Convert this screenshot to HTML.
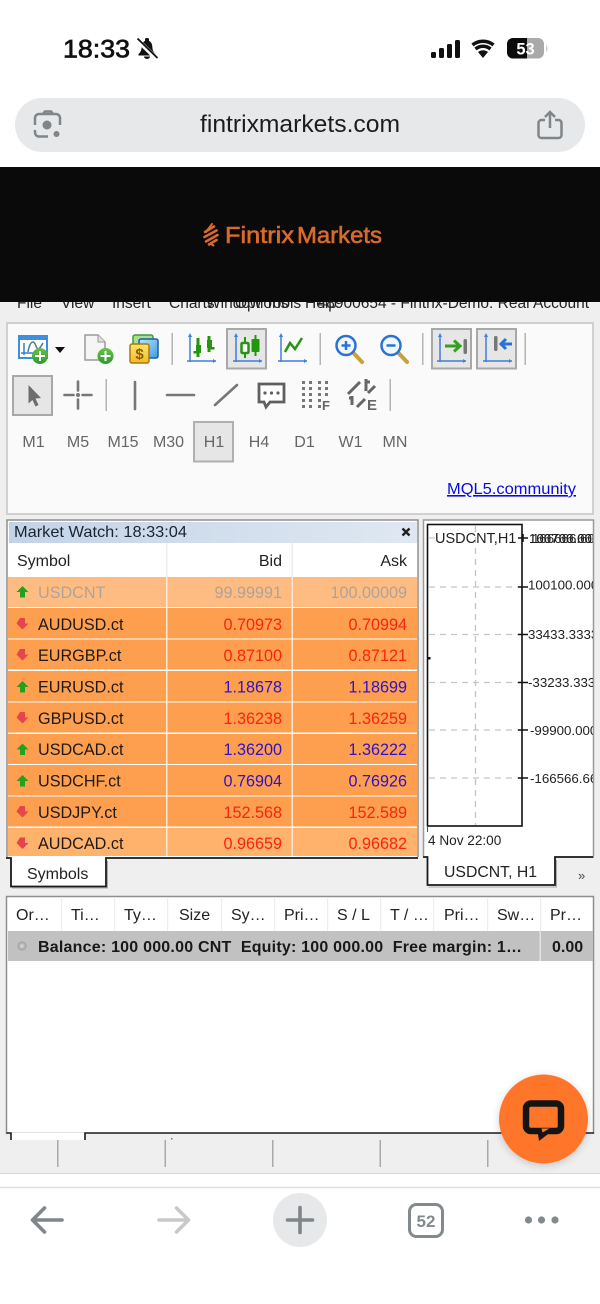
<!DOCTYPE html>
<html><head><meta charset="utf-8"><style>
html,body{margin:0;padding:0;background:#fff;width:600px;height:1304px;overflow:hidden}
svg{display:block;font-family:"Liberation Sans",sans-serif}
.r{font-size:16.2px;fill:#1e1a18}
.red{fill:#fa2410;font-size:16.2px;text-anchor:end}
.blu{fill:#2f12c8;font-size:16.2px;text-anchor:end}
.g{fill:#aaa49c;font-size:16.2px}
.tf{font-size:16px;fill:#666;text-anchor:middle}
.th{font-size:16px;fill:#222}
.ax{font-size:13.3px;fill:#222}
</style></head><body>
<svg width="600" height="1304" viewBox="0 0 600 1304" xmlns="http://www.w3.org/2000/svg">
<defs>
<linearGradient id="tt" x1="0" x2="1" y1="0" y2="0"><stop offset="0" stop-color="#c3d3e6"/><stop offset="1" stop-color="#dfe8f2"/></linearGradient>
<linearGradient id="gb" x1="0" x2="0" y1="0" y2="1"><stop offset="0" stop-color="#6cc04a"/><stop offset="1" stop-color="#2c9a2c"/></linearGradient>
<linearGradient id="yl" x1="0" x2="0" y1="0" y2="1"><stop offset="0" stop-color="#ffe36a"/><stop offset="1" stop-color="#f5bb22"/></linearGradient>
<linearGradient id="bl" x1="0" x2="1" y1="0" y2="1"><stop offset="0" stop-color="#bfe4fb"/><stop offset="1" stop-color="#3c9be6"/></linearGradient>
<radialGradient id="dot"><stop offset="0" stop-color="#dedede"/><stop offset="1" stop-color="#9a9a9a"/></radialGradient>
<clipPath id="axc"><rect x="524" y="524" width="69" height="270"/></clipPath>
<clipPath id="menu"><rect x="0" y="302" width="600" height="12"/></clipPath>
<clipPath id="batL"><rect x="507" y="38" width="20" height="21"/></clipPath>
<filter id="sh" x="-30%" y="-30%" width="160%" height="160%"><feDropShadow dx="0" dy="2" stdDeviation="4" flood-color="#000" flood-opacity=".18"/></filter>
<g id="up"><path d="M0 6 L6 0 L12 6 H8.5 V11.5 H3.5 V6 Z" fill="#22a01e"/></g>
<g id="dn"><path d="M3.5 0 H8.5 V5.5 H12 L6 11.5 L0 5.5 Z" fill="#e3474a"/></g>
</defs>

<!-- status bar -->
<text x="63" y="57.5" font-size="25" fill="#111" stroke="#111" stroke-width=".7" textLength="67" lengthAdjust="spacingAndGlyphs">18:33</text>
<g fill="#111">
<path d="M138.500 54 c2.500-2 3-4.500 3.200-7.500 c.2-3.500 2-6 5.300-6 s5.100 2.500 5.300 6 c.2 3 .7 5.500 3.200 7.500 v1.500 h-17z"/>
<rect x="145" y="38" width="4" height="4" rx="1.500"/><path d="M144 56.500 h6 a3 2.500 0 0 1-6 0z"/>
<rect x="431" y="52" width="5" height="6" rx="1.500"/><rect x="439" y="48" width="5" height="10" rx="1.500"/><rect x="447" y="44" width="5" height="14" rx="1.500"/><rect x="455" y="40" width="5" height="18" rx="1.500"/>
<path d="M483 58 l-5-6 a8 8 0 0 1 10 0z"/>
</g>
<path d="M137 39.500 L157 59" stroke="#fff" stroke-width="4.500"/><path d="M137.500 38.500 L157.500 58" stroke="#111" stroke-width="1.800"/>
<g fill="none" stroke="#111" stroke-width="3.500"><path d="M475.500 49 a11.500 11.500 0 0 1 15 0"/><path d="M472.500 45 a16.500 16.500 0 0 1 21 0"/></g>
<rect x="507" y="38" width="37" height="20.500" rx="6" fill="#a9a9a9"/>
<rect x="507" y="38" width="37" height="20.500" rx="6" fill="#0c0c0c" clip-path="url(#batL)"/>
<path d="M546 45 a3 4 0 0 1 0 7z" fill="#ccc"/>
<text x="525.500" y="54.500" font-size="16.500" font-weight="700" fill="#fff" text-anchor="middle">53</text>

<!-- url bar -->
<rect x="15" y="98" width="570" height="54" rx="27" fill="#e6e8ea"/>
<text x="300" y="132" font-size="24" fill="#1c1c1c" text-anchor="middle" textLength="200" lengthAdjust="spacingAndGlyphs">fintrixmarkets.com</text>
<g fill="none" stroke="#7f8589" stroke-width="2.500">
<path d="M35 125 v-7 a4 4 0 0 1 4-4 h17 a4 4 0 0 1 4 4 v7"/><path d="M35 130 v2.500 a4 4 0 0 0 4 4 h9"/>
<path d="M43 114 l2-2.500 h6 l2 2.500"/>
<path d="M545 120 h-3.500 a3 3 0 0 0-3 3 v12 a3 3 0 0 0 3 3 h17 a3 3 0 0 0 3-3 v-12 a3 3 0 0 0-3-3 h-3.500"/>
<path d="M550 128 v-15 M545 117 l5-5 l5 5"/>
</g>
<circle cx="47" cy="125" r="4.500" fill="#7f8589"/><circle cx="56.500" cy="134" r="3" fill="#7f8589"/>

<!-- page bg -->
<rect x="0" y="302" width="600" height="871" fill="#efefef"/>
<line x1="0" x2="600" y1="1173.500" y2="1173.500" stroke="#d8d8d8"/>

<!-- menu clipped -->
<g clip-path="url(#menu)" font-size="15.500" fill="#222">
<text x="17" y="308">File</text><text x="61" y="308">View</text><text x="112" y="308">Insert</text><text x="169" y="308">Charts</text>
<text x="206" y="308">Window</text><text x="235" y="308">Options</text><text x="265" y="308">Tools</text><text x="305" y="308">Help</text>
<text x="589" y="308" text-anchor="end">48900654 - Fintrix-Demo: Real Account</text>
</g>

<!-- black header -->
<rect x="0" y="167" width="600" height="135" fill="#0a0a0a"/>
<g fill="none" stroke="#d96a2c" stroke-width="2.600" stroke-linecap="round">
<path d="M205 232 L214 226.500 M204.500 237 L216.500 230.500 M206 241.500 L217.500 235 M209 244.500 L216.500 240"/>
<path d="M212 224 L206 232 M211 244 L213.500 245.500" stroke-width="2"/>
</g>
<g fill="#d96a2c" stroke="#d96a2c" stroke-width=".6" font-size="23">
<text x="225" y="243" textLength="69" lengthAdjust="spacingAndGlyphs">Fintrix</text>
<text x="297" y="243" textLength="85" lengthAdjust="spacingAndGlyphs">Markets</text>
</g>

<!-- toolbar panel -->
<rect x="7" y="323" width="586" height="191" fill="#fafafa" stroke="#d0d0d0" stroke-width="2"/>

<!-- new chart -->
<rect x="19" y="336" width="28" height="22" fill="#fff" stroke="#3f8fdc" stroke-width="2"/><rect x="19" y="336" width="28" height="4" fill="#3f8fdc"/>
<path d="M24 343 v12 M21 353 h22" stroke="#3a7fc8" stroke-width="1.500" fill="none"/><path d="M28 352 c2-12 6-12 8-6 s4 2 7-3" stroke="#4a7f80" stroke-width="1.500" fill="none"/>
<circle cx="40" cy="356" r="8" fill="url(#gb)"/><path d="M40 351 v10 M35 356 h10" stroke="#fff" stroke-width="2"/>
<path d="M55 347 h10 l-5 6z" fill="#111"/>
<!-- new doc -->
<path d="M85 335 h13 l7 7 v18 h-20z" fill="#f5f5f5" stroke="#999" stroke-width="1.500"/><path d="M98 335 v7 h7" fill="#e0e0e0" stroke="#999"/>
<circle cx="105.500" cy="356" r="8" fill="url(#gb)"/><path d="M105.500 351 v10 M100.500 356 h10" stroke="#fff" stroke-width="2"/>
<!-- dollars -->
<rect x="133" y="335" width="20" height="18" rx="2" fill="#a8e08c" stroke="#3f9a3f" stroke-width="1.500"/>
<rect x="139" y="339" width="19" height="19" rx="2" fill="url(#bl)" stroke="#1c5ca8" stroke-width="1.500"/>
<rect x="130" y="344" width="19" height="19" rx="2" fill="url(#yl)" stroke="#a87a10" stroke-width="1.500"/>
<text x="139.500" y="359" font-size="15" font-weight="700" fill="#8a5a05" text-anchor="middle">$</text>
<g fill="#b4b4b4"><rect x="171.500" y="333" width="1.500" height="32"/><rect x="319.500" y="333" width="1.500" height="32"/><rect x="422" y="333" width="1.500" height="32"/><rect x="524.500" y="333" width="1.500" height="32"/><rect x="105.500" y="379" width="1.500" height="32"/><rect x="389.500" y="379" width="1.500" height="32"/></g>

<!-- axes icons -->
<rect x="227" y="329" width="39" height="39.500" fill="#e6e6e6" stroke="#a8a8a8" stroke-width="2"/>
<g fill="none" stroke="#3f7fd8" stroke-width="1.500">
<path d="M190 335 v27 M187 361 h29"/>
<path d="M236 335 v27 M233 361 h29"/>
<path d="M281 335 v27 M278 361 h29"/>
</g>
<g fill="#3f7fd8"><path d="M190 333 l-2 4 h4z M216 361 l-3-2 v4z M236 333 l-2 4 h4z M262 361 l-3-2 v4z M281 333 l-2 4 h4z M307 361 l-3-2 v4z"/></g>
<g fill="#22960f">
<rect x="196.500" y="338" width="3" height="19"/><rect x="196" y="345" width="5" height="8"/><rect x="193.500" y="351" width="4" height="2.500"/>
<rect x="207.500" y="336" width="3" height="16"/><rect x="207" y="340" width="5" height="8"/><rect x="210" y="347" width="4.500" height="2.500"/>
<rect x="244" y="337" width="2" height="21"/><rect x="254.500" y="335" width="2" height="21"/><rect x="251.500" y="339" width="8" height="13" rx="1"/>
</g>
<rect x="241.500" y="343" width="7" height="10" rx="1" fill="#fff" stroke="#22960f" stroke-width="2.500"/>
<path d="M285 352 l5-9 l5 6 l7-11" fill="none" stroke="#22960f" stroke-width="2.500"/>

<!-- zoom -->
<g fill="none"><path d="M353.500 353 L362 362" stroke="#c9a040" stroke-width="4" stroke-linecap="round"/><circle cx="346" cy="345.500" r="9.500" fill="#f2f8ff" stroke="#2a72d6" stroke-width="2.500"/><path d="M341.500 345.500 h9 M346 341 v9" stroke="#2a72d6" stroke-width="2.500"/>
<path d="M398.500 353 L407 362" stroke="#c9a040" stroke-width="4" stroke-linecap="round"/><circle cx="391" cy="345.500" r="9.500" fill="#f2f8ff" stroke="#2a72d6" stroke-width="2.500"/><path d="M386.500 345.500 h9" stroke="#2a72d6" stroke-width="2.500"/></g>

<!-- shift buttons -->
<rect x="432" y="329" width="39" height="39.500" fill="#e6e6e6" stroke="#a8a8a8" stroke-width="2"/>
<rect x="477" y="329" width="39" height="39.500" fill="#e6e6e6" stroke="#a8a8a8" stroke-width="2"/>
<g fill="none" stroke="#3f7fd8" stroke-width="1.500"><path d="M440 335 v27 M437 361 h29 M486 335 v27 M483 361 h29"/></g>
<g fill="#3f7fd8"><path d="M440 333 l-2 4 h4z M466 361 l-3-2 v4z M486 333 l-2 4 h4z M512 361 l-3-2 v4z"/></g>
<path d="M445 346 h14 M454 340.500 l6 5.500 l-6 5.500" fill="none" stroke="#2fa31c" stroke-width="3"/><rect x="463.500" y="339" width="3.500" height="15" rx="1.500" fill="#777"/>
<rect x="494" y="336" width="3.500" height="15" rx="1.500" fill="#777"/><path d="M512 344 h-10 M506 339 l-5 5 l5 5" fill="none" stroke="#2a72d6" stroke-width="3"/>

<!-- row 2 -->
<rect x="13" y="376" width="39" height="39" fill="#e6e6e6" stroke="#a8a8a8" stroke-width="2"/>
<path d="M28.500 385 L41 398 L35.500 398.500 L38.500 405 L35.500 406.500 L32.500 400 L28.500 403.500 Z" fill="#6d6d6d"/>
<g stroke="#777" stroke-width="2.600" stroke-linecap="round" fill="none">
<path d="M64.500 395 h9 M82.500 395 h9 M78 381.500 v9 M78 399.500 v9"/>
<path d="M135 382 v27 M167 395 h27 M215 405 L237 385"/>
</g>
<circle cx="78" cy="395" r="2" fill="#777"/>
<path d="M259 384 h25 v18 h-14 l-4 5 l-2-5 h-5z" fill="#fff" stroke="#5f5f5f" stroke-width="2.800"/>
<g fill="#5f5f5f"><circle cx="265" cy="393" r="1.600"/><circle cx="271.500" cy="393" r="1.600"/><circle cx="278" cy="393" r="1.600"/></g>
<g fill="#777"><path d="M302 381h3v3h-3zM309 381h3v3h-3zM318 381h3v3h-3zM325 381h3v3h-3zM302 387h3v3h-3zM309 387h3v3h-3zM318 387h3v3h-3zM325 387h3v3h-3zM302 393h3v3h-3zM309 393h3v3h-3zM318 393h3v3h-3zM325 393h3v3h-3zM302 399h3v3h-3zM309 399h3v3h-3zM318 399h3v3h-3zM302 405h3v3h-3zM309 405h3v3h-3zM318 405h3v3h-3z"/></g>
<text x="322" y="410" font-size="13" font-weight="700" fill="#666">F</text>
<g stroke="#666" stroke-width="3" fill="none"><path d="M348 394 L360 382 M368 393 L375 386 M352 405 v-9 M349 398 h3 M366 379 v12 M366 382 h4 M357 407 L365 399"/></g>
<text x="367" y="410" font-size="15" font-weight="700" fill="#666">E</text>

<!-- row 3 -->
<rect x="194" y="422" width="39" height="39.500" fill="#e6e6e6" stroke="#b0b0b0" stroke-width="2"/>
<g class="tf"><text class="tf" x="33.500" y="447">M1</text><text class="tf" x="78" y="447">M5</text><text class="tf" x="123" y="447">M15</text><text class="tf" x="168.500" y="447">M30</text><text class="tf" x="214" y="447">H1</text><text class="tf" x="259" y="447">H4</text><text class="tf" x="304.500" y="447">D1</text><text class="tf" x="350.500" y="447">W1</text><text class="tf" x="395" y="447">MN</text></g>
<text x="447" y="494" font-size="16" fill="#0a0ae6" text-decoration="underline" textLength="129" lengthAdjust="spacingAndGlyphs">MQL5.community</text>

<!-- market watch -->
<rect x="7" y="520" width="411" height="338" fill="#fff" stroke="#8f8f8f" stroke-width="1.500"/>
<rect x="9" y="522" width="408" height="21" fill="url(#tt)"/>
<text x="14" y="537" font-size="16" fill="#1a2430" textLength="173" lengthAdjust="spacingAndGlyphs">Market Watch: 18:33:04</text>
<path d="M402.500 528.500 l7 7 M409.500 528.500 l-7 7" stroke="#222" stroke-width="2.400"/>
<rect x="166" y="543" width="1.500" height="34" fill="#eee"/><rect x="291.500" y="543" width="1.500" height="34" fill="#eee"/>
<text class="th" x="17" y="566">Symbol</text><text class="th" x="282" y="566" text-anchor="end">Bid</text><text class="th" x="407" y="566" text-anchor="end">Ask</text>

<rect x="8" y="577" width="409" height="30" fill="#ffbc82"/>
<rect x="8" y="608" width="409" height="30.500" fill="#fd9f4e"/>
<rect x="8" y="639.500" width="409" height="30" fill="#fd9f4e"/>
<rect x="8" y="671" width="409" height="30.500" fill="#fd9f4e"/>
<rect x="8" y="702.500" width="409" height="30" fill="#fd9f4e"/>
<rect x="8" y="734" width="409" height="30" fill="#fd9f4e"/>
<rect x="8" y="765" width="409" height="30.500" fill="#fd9f4e"/>
<rect x="8" y="796.500" width="409" height="30" fill="#fd9f4e"/>
<rect x="8" y="828" width="409" height="28" fill="#ffb26c"/>
<rect x="166" y="577" width="1.500" height="279" fill="#ffe9d5"/><rect x="291.500" y="577" width="1.500" height="279" fill="#ffe9d5"/>

<use href="#up" x="16.500" y="586"/><use href="#dn" x="16.500" y="618"/><use href="#dn" x="16.500" y="649"/><use href="#up" x="16.500" y="681"/><use href="#dn" x="16.500" y="712"/><use href="#up" x="16.500" y="743.500"/><use href="#up" x="16.500" y="775"/><use href="#dn" x="16.500" y="806"/><use href="#dn" x="16.500" y="837.500"/>

<text class="g" x="38" y="598">USDCNT</text><text class="g" x="282" y="598" text-anchor="end">99.99991</text><text class="g" x="407" y="598" text-anchor="end">100.00009</text>
<text class="r" x="38" y="630">AUDUSD.ct</text><text class="red" x="282" y="630">0.70973</text><text class="red" x="407" y="630">0.70994</text>
<text class="r" x="38" y="661">EURGBP.ct</text><text class="red" x="282" y="661">0.87100</text><text class="red" x="407" y="661">0.87121</text>
<text class="r" x="38" y="692.500">EURUSD.ct</text><text class="blu" x="282" y="692.500">1.18678</text><text class="blu" x="407" y="692.500">1.18699</text>
<text class="r" x="38" y="724">GBPUSD.ct</text><text class="red" x="282" y="724">1.36238</text><text class="red" x="407" y="724">1.36259</text>
<text class="r" x="38" y="755">USDCAD.ct</text><text class="blu" x="282" y="755">1.36200</text><text class="blu" x="407" y="755">1.36222</text>
<text class="r" x="38" y="786.500">USDCHF.ct</text><text class="blu" x="282" y="786.500">0.76904</text><text class="blu" x="407" y="786.500">0.76926</text>
<text class="r" x="38" y="818">USDJPY.ct</text><text class="red" x="282" y="818">152.568</text><text class="red" x="407" y="818">152.589</text>
<text class="r" x="38" y="849">AUDCAD.ct</text><text class="red" x="282" y="849">0.96659</text><text class="red" x="407" y="849">0.96682</text>

<!-- symbols tab -->
<rect x="6" y="857" width="413" height="3" fill="#efefef"/>
<rect x="11" y="856.500" width="95" height="30" fill="#fff"/>
<path d="M6 858 H11 V886.500 H106 V858 H418" fill="none" stroke="#1a1a1a" stroke-width="1.800"/>
<path d="M12 888 H107.500 V861" fill="none" stroke="#aaa" stroke-width="1"/>
<text x="27" y="879" font-size="16" fill="#222">Symbols</text>

<!-- chart panel -->
<rect x="423.500" y="520" width="170" height="337" fill="#fff" stroke="#9a9a9a" stroke-width="1.500"/>
<rect x="427.500" y="524.500" width="94.500" height="301.500" fill="#fff" stroke="#111" stroke-width="1.600"/>
<g stroke="#c4c4c4" stroke-width="1.300" stroke-dasharray="6 5" fill="none">
<path d="M429 587 H521 M429 634.500 H521 M429 682.500 H521 M429 730 H521 M429 778 H521 M475.500 526 V825"/>
</g>
<path d="M429 538 H435" stroke="#bbb"/>
<rect x="428" y="657" width="2.500" height="2.500" fill="#111"/>
<path d="M518 538 H528 M518 587 H528 M518 634.500 H528 M518 682.500 H528 M518 730 H528 M518 778 H528 M523 534 V542" stroke="#111" stroke-width="1.500" fill="none"/>
<path d="M427.500 826 V832" stroke="#555"/>
<text x="435" y="543" font-size="14.500" fill="#222">USDCNT,H1</text>
<g clip-path="url(#axc)"><text class="ax" x="529" y="543">166766.6666</text><text class="ax" x="529" y="543">100700.0000</text><text class="ax" x="532" y="543">166666.6066</text>
<text class="ax" x="528" y="589.500">100100.0000</text><text class="ax" x="528" y="639">33433.33333</text><text class="ax" x="528" y="687">-33233.3333</text><text class="ax" x="530" y="735">-99900.0000</text><text class="ax" x="530" y="783">-166566.666</text></g>
<text x="428" y="845" font-size="13.600" fill="#222">4 Nov 22:00</text>
<rect x="422" y="856" width="173" height="3" fill="#efefef"/>
<rect x="427.500" y="850" width="127.500" height="35" fill="#fff"/>
<path d="M423 857 H427.500 V885 H555 V857 H593.500" fill="none" stroke="#1a1a1a" stroke-width="1.800"/>
<path d="M428.500 887 H556.500 V860" fill="none" stroke="#aaa"/>
<text x="444" y="877" font-size="15.800" fill="#222">USDCNT, H1</text>
<text x="578" y="880" font-size="13" fill="#444">»</text>

<!-- terminal -->
<rect x="6.500" y="896.500" width="587" height="237" fill="#fff" stroke="#8f8f8f" stroke-width="1.500"/>
<g fill="#eee"><rect x="61" y="898" width="1.200" height="33"/><rect x="114" y="898" width="1.200" height="33"/><rect x="167" y="898" width="1.200" height="33"/><rect x="221" y="898" width="1.200" height="33"/><rect x="274" y="898" width="1.200" height="33"/><rect x="327" y="898" width="1.200" height="33"/><rect x="380" y="898" width="1.200" height="33"/><rect x="433" y="898" width="1.200" height="33"/><rect x="487" y="898" width="1.200" height="33"/><rect x="540" y="898" width="1.200" height="33"/></g>
<g font-size="16" fill="#222"><text x="16" y="920">Or…</text><text x="71" y="920">Ti…</text><text x="124" y="920">Ty…</text><text x="179" y="920">Size</text><text x="231" y="920">Sy…</text><text x="284" y="920">Pri…</text><text x="337" y="920">S / L</text><text x="390" y="920">T / …</text><text x="444" y="920">Pri…</text><text x="497" y="920">Sw…</text><text x="550" y="920">Pr…</text></g>
<rect x="8" y="931" width="585" height="30" fill="#c1c1c1"/><rect x="539.500" y="931" width="1.500" height="30" fill="#e4e4e4"/>
<circle cx="22" cy="946" r="4.500" fill="url(#dot)"/>
<text x="38" y="952" font-size="16" font-weight="700" fill="#181818" xml:space="preserve" textLength="484" lengthAdjust="spacing">Balance: 100 000.00 CNT  Equity: 100 000.00  Free margin: 1…</text>
<text x="552" y="952" font-size="16" font-weight="700" fill="#181818">0.00</text>

<!-- terminal bottom -->
<rect x="0" y="1140" width="600" height="33" fill="#efefef"/>
<rect x="7" y="1133" width="4" height="7" fill="#efefef"/>
<rect x="11" y="1133" width="74" height="7" fill="#fff"/>
<rect x="85" y="1133" width="509" height="7" fill="#efefef"/>
<path d="M6.500 1133 H11 V1140 M85 1140 V1133 H594" fill="none" stroke="#1a1a1a" stroke-width="1.600"/>
<rect x="171" y="1138" width="1.500" height="1.500" fill="#777"/>
<g fill="#a8a8a8"><rect x="57" y="1140" width="1.500" height="27"/><rect x="164.500" y="1140" width="1.500" height="27"/><rect x="272" y="1140" width="1.500" height="27"/><rect x="379.500" y="1140" width="1.500" height="27"/><rect x="487" y="1140" width="1.500" height="27"/></g>

<!-- chat -->
<circle cx="543.500" cy="1119" r="44.500" fill="#ff762b" filter="url(#sh)"/>
<path d="M531 1103.500 h25 a5 5 0 0 1 5 5 v17.500 a5 5 0 0 1-5 5 h-25 a5 5 0 0 1-5-5 v-17.500 a5 5 0 0 1 5-5z" fill="none" stroke="#141414" stroke-width="6.500"/>
<path d="M537.500 1131 l1.500 10 l13-10z" fill="#141414"/>
<path d="M541.500 1128.500 l1 4 l7-4z" fill="#ff762b"/>

<!-- browser toolbar -->
<line x1="0" x2="600" y1="1187.500" y2="1187.500" stroke="#e0e0e0" stroke-width="1.500"/>
<g fill="none" stroke-width="3.600" stroke-linecap="round" stroke-linejoin="round">
<path d="M62 1220 H33 M44.500 1208 L32.500 1220 L44.500 1232" stroke="#80878a"/>
<path d="M159 1220 H188 M176.500 1208 L188.500 1220 L176.500 1232" stroke="#c9c9c9"/>
</g>
<circle cx="300" cy="1220" r="27" fill="#e6e8ea"/>
<path d="M287.500 1220 H312.500 M300 1207.500 V1232.500" stroke="#7f8589" stroke-width="3.600" stroke-linecap="round"/>
<rect x="409.500" y="1204.500" width="33" height="32" rx="7" fill="none" stroke="#838a8d" stroke-width="3"/>
<text x="426" y="1227" font-size="17" font-weight="700" fill="#838a8d" text-anchor="middle">52</text>
<circle cx="528.500" cy="1220" r="3.600" fill="#838a8d"/><circle cx="541.500" cy="1220" r="3.600" fill="#838a8d"/><circle cx="555" cy="1220" r="3.600" fill="#838a8d"/>
</svg>
</body></html>
